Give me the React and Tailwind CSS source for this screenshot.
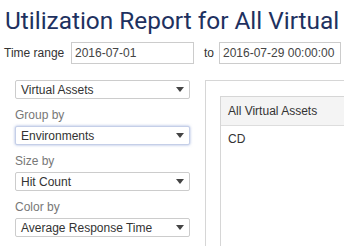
import React from 'react';

const Caret = () => (
  <svg width="8" height="5" viewBox="0 0 8 5" className="shrink-0">
    <path d="M0 0 L8 0 L4 5 Z" fill="#444" />
  </svg>
);

function Select({ value, focused }) {
  return (
    <div
      className={`flex items-center justify-between h-[19px] pl-[5px] pr-[5px] bg-white border rounded-[2px] text-[12px] text-[#333] leading-none ${
        focused ? 'border-[#c5cfe8] shadow-[0_0_3px_rgba(102,130,200,0.6)]' : 'border-[#ccc]'
      }`}
    >
      <span>{value}</span>
      <Caret />
    </div>
  );
}

function App() {
  const groups = [
    { label: 'Group by', value: 'Environments', focused: true },
    { label: 'Size by', value: 'Hit Count' },
    { label: 'Color by', value: 'Average Response Time' },
  ];

  return (
    <div className="w-[344px] h-[246px] overflow-hidden bg-white font-['Liberation_Sans',Arial,sans-serif]">
      {/* Title */}
      <h1 className="pl-[5px] pt-[6px] h-[38px] text-[24.4px] leading-[30px] whitespace-nowrap text-[#1e3160] font-['Roboto',sans-serif]">
        Utilization Report for All Virtual
      </h1>

      {/* Time range */}
      <div className="flex items-center h-[22px] mt-[4px] pl-[4px] text-[12px] text-[#333] whitespace-nowrap">
        <span className="w-[67px]">Time range</span>
        <div className="w-[123px] h-[22px] shrink-0 border border-[#ccc] pl-[3px] flex items-center text-[#444]">2016-07-01</div>
        <span className="ml-[10px] w-[15px]">to</span>
        <div className="w-[122px] h-[22px] shrink-0 border border-[#ccc] pl-[3px] flex items-center text-[#444]">2016-07-29 00:00:00</div>
      </div>

      <div className="flex mt-[16px]">
        {/* Left controls */}
        <div className="w-[175px] ml-[15px] shrink-0">
          <Select value="Virtual Assets" />
          {groups.map((g) => (
            <div key={g.label} className="mt-[9px]">
              <div className="text-[12px] text-[#777] leading-[15px] mb-[3px]">{g.label}</div>
              <Select value={g.value} focused={g.focused} />
            </div>
          ))}
        </div>

        {/* Right panel */}
        <div className="ml-[15px] flex-1 border-l border-t border-[#d6d6d6] h-[200px] pl-[14px] pt-[15px]">
          <div className="border-l border-t border-[#d6d6d6] h-full">
            <div className="h-[29px] bg-[#f4f4f4] border-b border-[#ddd] flex items-center pl-[7px] text-[12px] text-[#333]">
              All Virtual Assets
            </div>
            <div className="pl-[7px] pt-[4px] text-[12px] text-[#333]">CD</div>
          </div>
        </div>
      </div>
    </div>
  );
}

export default App;
